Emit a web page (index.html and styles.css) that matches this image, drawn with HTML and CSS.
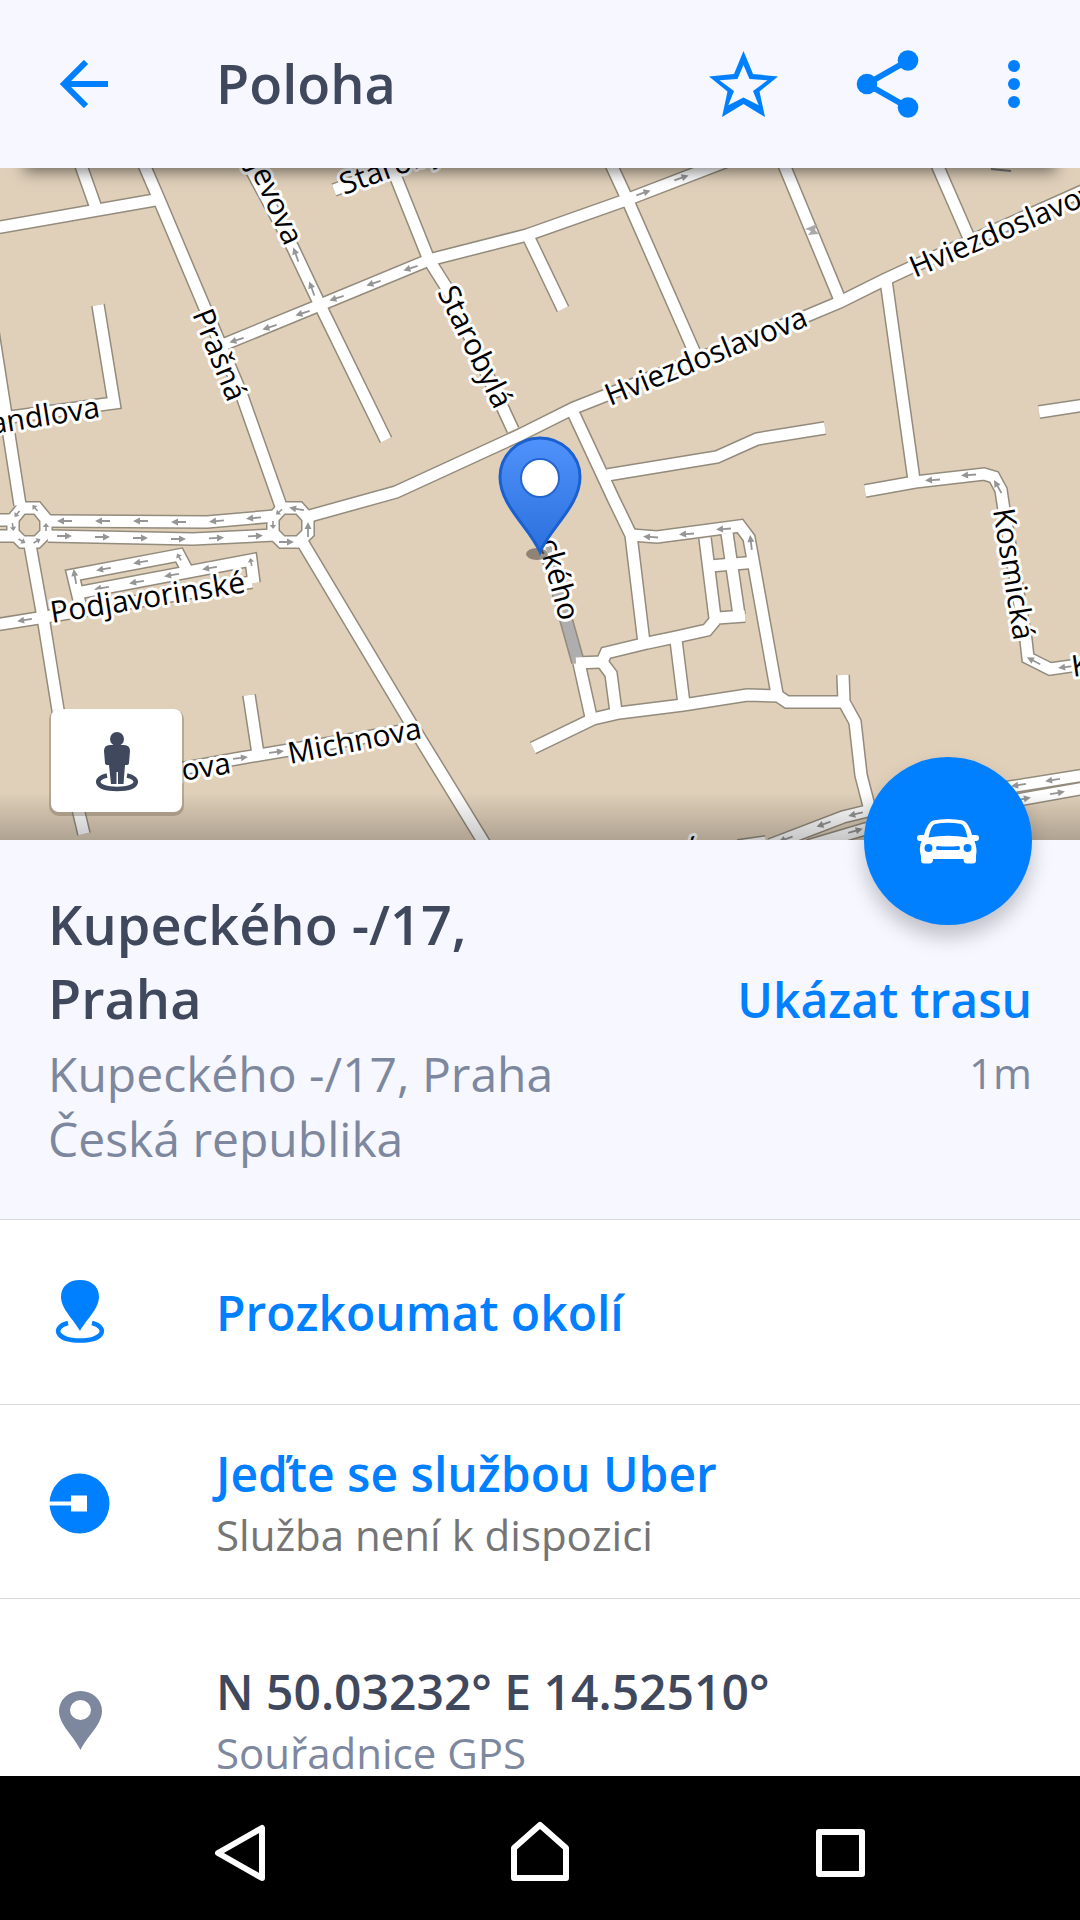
FILE: index.html
```html
<!DOCTYPE html>
<html lang="cs">
<head>
<meta charset="utf-8">
<meta name="viewport" content="width=device-width, initial-scale=1">
<title>Poloha</title>
<link rel="stylesheet" href="styles.css">
</head>
<body>
<header class="toolbar">
  <button class="tool tool-back" type="button" aria-label="Zpět">
    <svg width="48" height="48" viewBox="0 0 48 48" fill="none" stroke="currentColor" stroke-width="6"><path d="M48 24H5M26 2L4 24L26 46"/></svg>
  </button>
  <h1 class="toolbar-title">Poloha</h1>
  <button class="tool" type="button" aria-label="Přidat k oblíbeným">
    <svg width="72" height="72" viewBox="0 0 72 72" fill="currentColor" fill-rule="evenodd"><path d="M35.500 3L45 26L70 28.500L51.500 43.500L57 69L35.500 56L14 69L19.500 43.500L1 28.500L26 26ZM35.500 17L29.500 31L11.500 32.300L26 43L20.300 57.300L35.500 49.500L50.700 57.300L45 43L59.500 32.300L41.500 31Z"/></svg>
  </button>
  <button class="tool" type="button" aria-label="Sdílet">
    <svg width="72" height="72" viewBox="0 0 72 72" fill="currentColor"><path d="M56 12.500L15 36L56 59.500" fill="none" stroke="currentColor" stroke-width="6"/><circle cx="15" cy="36" r="10.300"/><circle cx="56" cy="12.500" r="10.300"/><circle cx="56" cy="59.500" r="10.300"/></svg>
  </button>
  <button class="tool tool-menu" type="button" aria-label="Další možnosti">
    <svg width="12" height="48" viewBox="0 0 12 48" fill="currentColor"><circle cx="6" cy="6" r="6"/><circle cx="6" cy="24" r="6"/><circle cx="6" cy="42" r="6"/></svg>
  </button>
</header>

<main class="content">
  <section class="map" aria-label="Mapa">
    <svg class="map-canvas" viewBox="0 168 1080 672" preserveAspectRatio="xMidYMid slice">
      <defs>
        <g id="roads">
          <path d="M-5 228L155 200"/>
          <path d="M79 160L96 208"/>
          <path d="M142 160L158 197L207 313L241 393L283 512"/>
          <path d="M246 160L293 248L320 305L386 440"/>
          <path d="M220 346L320 305L429 260L527 235L626 200L730 160"/>
          <path d="M334 190L400 165"/>
          <path d="M389 160L429 260L448 290L513 430"/>
          <path d="M306 517L396 492L520 435L574 408L809 315L840 302L884 280L912 267L1085 190"/>
          <path d="M528 236L563 309"/>
          <path d="M609 160L628 201L697 358"/>
          <path d="M782 160L840 300"/>
          <path d="M935 160L969 238"/>
          <path d="M886 280L914 480"/>
          <path d="M865 491L915 482L984 474L994 477L1001 490L1004 510L1026 640L1028 658L1050 669L1085 664"/>
          <path d="M1039 412L1085 405"/>
          <path d="M607 475L717 457L757 439L825 428"/>
          <path d="M572 410L614 500L631 535L644 643"/>
          <path d="M631 535L657 537L740 526L749 538L753 560L777 694"/>
          <path d="M705 538L715 618"/>
          <path d="M710 566L757 562"/>
          <path d="M727 533L739 615"/>
          <path d="M745 616L717 618L707 630L676 637L647 643L606 653L602 662L576 663"/>
          <path d="M579 663L591 717"/>
          <path d="M602 662L611 674L616 712"/>
          <path d="M676 640L684 704"/>
          <path d="M533 748L593 719L619 713L683 705L747 695L778 696L787 702L845 702"/>
          <path d="M843 675L844 702L855 722L861 775L870 810"/>
          <path d="M-7 332L20 505"/>
          <path d="M98 305L114 403L-5 419"/>
          <path d="M30 545L43 617L58 710L79 813L84 834"/>
          <path d="M48 521L207 522L275 516"/>
          <path d="M48 536L193 539L275 535"/>
          <path d="M-5 520L14 520M-5 536L14 536"/>
          <path d="M22 508H37L46 519V533L37 542H22L13 533V519Z"/>
          <path d="M282 508H299L308 518V533L299 542H282L273 533V518Z"/>
          <path d="M80 604L73 575L179 555L187 570"/>
          <path d="M77 593L251 560L254 583"/>
          <path d="M-5 625L45 617L252 582"/>
          <path d="M303 543L410 722L486 846"/>
          <path d="M79 787L241 758L408 730"/>
          <path d="M249 695L258 754"/>
          <path d="M738 846L766 842"/>
          <path d="M770 845L843 817L880 808L1010 787L1085 775"/>
          <path d="M808 846L865 829L1023 799L1085 788"/>
        </g>
        <path id="arrow" d="M-7 -0.900H1V-3.500L8 0L1 3.500V0.900H-7Z"/>
        <path id="tick" d="M-4 -0.800H0V-3.200L4 0L0 3.200V0.800H-4Z"/>
        <linearGradient id="pinFill" x1="0" y1="0" x2="0" y2="1"><stop offset="0" stop-color="#5092fb"/><stop offset="1" stop-color="#2b70dd"/></linearGradient>
      </defs>

      <rect x="-1000" y="168" width="3080" height="672" fill="#e0d0ba"/>
      <path d="M545 548L560 598L578 662" class="path-case"/>
      <use href="#roads" class="road-case"/>
      <path d="M545 548L560 598L578 662" class="path-fill"/>
      <use href="#roads" class="road-fill"/>
      <path d="M805 229L817 224L815 230L819 234L808 235L811 231Z" fill="#aaa"/>
      <path d="M991 169L1011 171" stroke="#777" stroke-width="2"/>

      <g class="arrows">
        <use href="#arrow" transform="translate(237 340) rotate(162)"/><use href="#arrow" transform="translate(270 327) rotate(162)"/><use href="#arrow" transform="translate(303 313) rotate(162)"/><use href="#arrow" transform="translate(337 298) rotate(162)"/><use href="#arrow" transform="translate(374 283) rotate(162)"/><use href="#arrow" transform="translate(411 268) rotate(162)"/>
        <use href="#arrow" transform="translate(296 255) rotate(-110)"/><use href="#arrow" transform="translate(312 289) rotate(-110)"/>
        <use href="#arrow" transform="translate(643 193) rotate(-19)"/><use href="#arrow" transform="translate(681 178) rotate(-19)"/>
        <use href="#arrow" transform="translate(933 480) rotate(176)"/><use href="#arrow" transform="translate(969 475) rotate(176)"/><use href="#arrow" transform="translate(998 487) rotate(-120)"/>
        <use href="#arrow" transform="translate(1034 661) rotate(-153)"/><use href="#arrow" transform="translate(1066 667) rotate(172)"/>
        <use href="#arrow" transform="translate(651 537) rotate(184)"/><use href="#arrow" transform="translate(687 534) rotate(176)"/><use href="#arrow" transform="translate(724 529) rotate(176)"/><use href="#arrow" transform="translate(751 543) rotate(-97)"/>
        <use href="#arrow" transform="translate(65 521) rotate(180)"/><use href="#arrow" transform="translate(103 521) rotate(180)"/><use href="#arrow" transform="translate(141 521) rotate(180)"/><use href="#arrow" transform="translate(179 522) rotate(180)"/><use href="#arrow" transform="translate(217 521) rotate(175)"/><use href="#arrow" transform="translate(254 518) rotate(175)"/>
        <use href="#arrow" transform="translate(64 536)"/><use href="#arrow" transform="translate(102 537)"/><use href="#arrow" transform="translate(140 538)"/><use href="#arrow" transform="translate(178 539)"/><use href="#arrow" transform="translate(216 538) rotate(-3)"/><use href="#arrow" transform="translate(255 536) rotate(-3)"/>
        <use href="#arrow" transform="translate(141 562) rotate(170)"/><use href="#arrow" transform="translate(104 569) rotate(170)"/><use href="#arrow" transform="translate(75 577) rotate(-100)"/><use href="#tick" transform="translate(179 557) rotate(-120)"/>
        <use href="#arrow" transform="translate(210 568) rotate(170)"/><use href="#arrow" transform="translate(172 575) rotate(170)"/><use href="#arrow" transform="translate(137 582) rotate(170)"/><use href="#arrow" transform="translate(102 588) rotate(170)"/><use href="#tick" transform="translate(251 562) rotate(-100)"/>
        <use href="#arrow" transform="translate(25 620) rotate(171)"/>
        <use href="#arrow" transform="translate(240 758) rotate(-7)"/><use href="#arrow" transform="translate(276 752) rotate(-7)"/>
        <use href="#arrow" transform="translate(856 814) rotate(166)"/><use href="#arrow" transform="translate(824 824) rotate(160)"/><use href="#arrow" transform="translate(786 839) rotate(160)"/><use href="#arrow" transform="translate(855 831) rotate(-16)"/>
        <use href="#arrow" transform="translate(1019 785) rotate(171)"/><use href="#arrow" transform="translate(1053 780) rotate(171)"/><use href="#arrow" transform="translate(1023 799) rotate(-10)"/><use href="#arrow" transform="translate(1057 793) rotate(-10)"/>
        <use href="#tick" transform="translate(35 508) rotate(-130)"/><use href="#tick" transform="translate(17 514) rotate(130)"/><use href="#tick" transform="translate(13 527) rotate(80)"/><use href="#tick" transform="translate(22 541) rotate(30)"/><use href="#tick" transform="translate(37 541) rotate(-30)"/><use href="#tick" transform="translate(46 527) rotate(-90)"/>
        <use href="#arrow" transform="translate(297 509) rotate(190)"/><use href="#tick" transform="translate(279 512) rotate(140)"/><use href="#tick" transform="translate(273 525) rotate(90)"/><use href="#arrow" transform="translate(286 542)"/><use href="#arrow" transform="translate(308 530) rotate(-90)"/>
      </g>

      <g class="street">
        <text transform="translate(610 406) rotate(-22)">Hviezdoslavova</text>
        <text transform="translate(915 278) rotate(-23)">Hviezdoslavova</text>
        <text transform="translate(101 417) rotate(-9)" text-anchor="end">Handlova</text>
        <text transform="translate(192 314) rotate(68)">Prašná</text>
        <text transform="translate(285 247) rotate(66)" text-anchor="end">jevova</text>
        <text transform="translate(344 195) rotate(-20)">Starobylá</text>
        <text transform="translate(437 292) rotate(64)">Starobylá</text>
        <text transform="translate(993 510) rotate(81)">Kosmická</text>
        <text transform="translate(1073 677) rotate(-8)">Kosmická</text>
        <text transform="translate(560 622) rotate(75)" text-anchor="end">ckého</text>
        <text transform="translate(52 623) rotate(-9)">Podjavorinské</text>
        <text transform="translate(290 764) rotate(-11)">Michnova</text>
        <text transform="translate(232 773) rotate(-9)" text-anchor="end">Michnova</text>
        <text transform="translate(706 856) rotate(-20)" text-anchor="end">á</text>
      </g>

      <ellipse cx="537" cy="554" rx="11" ry="6" fill="#6b6259" opacity=".7"/>
      <path d="M540 552C530 528 500 506 500 477A40 39 0 0 1 580 477C580 506 550 528 540 552Z" fill="url(#pinFill)" stroke="#1a60cf" stroke-width="3"/>
      <circle cx="540" cy="478" r="19" fill="#fff" stroke="#2466cf" stroke-width="2"/>
    </svg>
    <button class="street-view" type="button" aria-label="Pohled z ulice">
      <svg width="48" height="64" viewBox="0 0 48 64" fill="#3f485c"><circle cx="24" cy="9" r="7"/><path d="M17 15H31Q37 15 37 21L36 33Q36 35 33 35H32L30.500 54H25V42H23.500V54H18L16 35H15Q12 35 12 33L11 21Q11 15 17 15Z"/><path d="M14 45.500C1 48 1 59 24 59C47 59 47 48 34 45.500" fill="none" stroke="#3f485c" stroke-width="4.500"/></svg>
    </button>
  </section>

  <section class="place">
    <button class="route-fab" type="button" aria-label="Trasa autem">
      <svg width="64" height="48" viewBox="0 0 64 48" fill="#fff" fill-rule="evenodd"><path d="M17 3.500Q32 .5 47 3.500Q53 6 56 18H60Q63 18 63 21Q63 24 60 24H58.500Q61.500 32 60 39V43Q60 46.500 57 46.500H51Q47.500 46.500 47.500 42H17Q17 46.500 13.500 46.500H8Q5 46.500 5 43V39Q2.500 32 5.500 24H4Q1 24 1 21Q1 18 4 18H8Q11 6 17 3.500ZM19 7Q15 8 12.500 20.500Q32 17 51.500 20.500Q49 8 45 7Q32 4.500 19 7ZM12.500 27A4 4 0 1 0 12.500 35A4 4 0 1 0 12.500 27ZM51.500 27A4 4 0 1 0 51.500 35A4 4 0 1 0 51.500 27ZM21.500 29Q32 30 42.500 29Q44 29 44 31Q44 33 42.500 33H21.500Q20 33 20 31Q20 29 21.500 29Z"/></svg>
    </button>
    <div class="place-main">
      <h2 class="place-name">Kupeckého -/17, Praha</h2>
      <p class="place-address">Kupeckého -/17, Praha<br>Česká republika</p>
    </div>
    <div class="place-route">
      <a class="route-link" href="#trasa">Ukázat trasu</a>
      <span class="route-distance">1m</span>
    </div>
  </section>

  <ul class="actions">
    <li>
      <a class="action" href="#okoli">
        <svg class="action-icon" viewBox="0 0 64 64" fill="currentColor"><path d="M32 50C27 40 13 28 13 16C13 5 21 -1 32 -1S51 5 51 16C51 28 37 40 32 50Z"/><path d="M20 42C4 46 7 59.500 32 59.500S60 46 44 42" fill="none" stroke="currentColor" stroke-width="4.500"/></svg>
        <span class="action-title">Prozkoumat okolí</span>
      </a>
    </li>
    <li>
      <a class="action" href="#uber">
        <svg class="action-icon" viewBox="0 0 64 64"><circle cx="31.500" cy="33.500" r="30" fill="currentColor"/><path d="M0 31.500H23V25.500H39V41.500H23V35.500H0Z" fill="#fff"/></svg>
        <span class="action-text"><span class="action-title">Jeďte se službou Uber</span><span class="action-note note-muted">Služba není k dispozici</span></span>
      </a>
    </li>
    <li>
      <div class="action action-info">
        <svg class="action-icon" viewBox="0 0 64 64" fill="#7d879e" fill-rule="evenodd"><path d="M32.500 62C26 48 11 37 11 23A21.500 20 0 0 1 54 23C54 37 39 48 32.500 62ZM32.500 12A10.500 10 0 1 0 32.500 32A10.500 10 0 1 0 32.500 12Z"/></svg>
        <span class="action-text"><span class="action-title">N 50.03232° E 14.52510°</span><span class="action-note">Souřadnice GPS</span></span>
      </div>
    </li>
  </ul>
</main>

<nav class="system-bar" aria-label="Systémová navigace">
  <button class="system-button" type="button" aria-label="Zpět"><svg viewBox="0 0 72 72"><path d="M14 41L58 16V66Z"/></svg></button>
  <button class="system-button" type="button" aria-label="Domů"><svg viewBox="0 0 72 72"><path d="M10 36L36 13L62 36V66H10Z"/></svg></button>
  <button class="system-button" type="button" aria-label="Přehled"><svg viewBox="0 0 72 72"><path d="M15 20H58V62H15Z"/></svg></button>
</nav>
</body>
</html>
```
FILE: styles.css
```css
:root {
  --blue: #0080ff;
  --ink: #3f485c;
  --slate: #7d879e;
  --panel: #f6f7ff;
  --line: #d7d9dc;
}

* {
  box-sizing: border-box;
  margin: 0;
  padding: 0;
}

body {
  display: flex;
  flex-direction: column;
  height: 100vh;
  overflow: hidden;
  background: #fff;
  color: var(--ink);
  font-family: "Open Sans", "Noto Sans", sans-serif;
}

button {
  border: 0;
  background: none;
  color: inherit;
  font: inherit;
  cursor: pointer;
}

a {
  color: var(--blue);
  text-decoration: none;
}

svg {
  display: block;
}

.toolbar {
  position: relative;
  z-index: 2;
  display: flex;
  flex: none;
  align-items: center;
  height: 168px;
  padding-right: 12px;
  background: var(--panel);
  box-shadow: 0 28px 14px -24px rgba(0, 0, 0, 0.5);
}

.tool {
  display: flex;
  flex: none;
  align-items: center;
  justify-content: center;
  width: 144px;
  height: 144px;
  color: var(--blue);
}

.tool-back {
  width: 168px;
}

.tool-menu {
  width: 108px;
}

.toolbar-title {
  flex: 1;
  padding: 0 0 2px 48px;
  font-size: 54px;
  font-weight: 600;
  line-height: 74px;
}

.content {
  flex: 1;
  min-height: 0;
  overflow: hidden;
}

.map {
  position: relative;
  height: 672px;
  overflow: hidden;
}

.map::after {
  content: "";
  position: absolute;
  inset: auto 0 0;
  height: 48px;
  background: linear-gradient(rgba(0, 0, 0, 0), rgba(0, 0, 0, 0.22));
  pointer-events: none;
}

.map-canvas {
  width: 100%;
  height: 100%;
}

.road-case,
.path-case {
  fill: none;
  stroke: #938b7c;
  stroke-width: 14px;
}

.road-fill,
.path-fill {
  fill: none;
  stroke: #fff;
  stroke-width: 11px;
}

.path-fill {
  stroke: #aeaeae;
}

.arrows {
  fill: #959595;
}

.street {
  fill: #000;
  stroke: #fff;
  stroke-width: 6px;
  stroke-linejoin: round;
  paint-order: stroke;
  font-size: 30px;
}

.street-view {
  position: absolute;
  z-index: 1;
  bottom: 28px;
  left: 51px;
  display: flex;
  align-items: center;
  justify-content: center;
  width: 131px;
  height: 103px;
  padding-top: 2px;
  border-radius: 8px;
  background: #fff;
  box-shadow: 0 2px 0 2px rgba(110, 95, 75, 0.35);
}

.place {
  position: relative;
  display: flex;
  align-items: flex-end;
  gap: 144px;
  padding: 47px 48px 48px;
  border-bottom: 1px solid var(--line);
  background: var(--panel);
}

.place-main {
  flex: 1;
}

.place-name {
  margin-bottom: 6px;
  font-size: 54px;
  font-weight: 600;
  line-height: 74px;
}

.place-address {
  color: var(--slate);
  font-size: 48px;
  line-height: 65px;
}

.place-route {
  display: flex;
  flex: none;
  flex-direction: column;
  align-self: flex-start;
  align-items: flex-end;
  gap: 12px;
  padding-top: 80px;
}

.route-link {
  font-size: 48px;
  font-weight: 600;
  line-height: 65px;
}

.route-distance {
  color: var(--slate);
  font-size: 42px;
  line-height: 57px;
}

.route-fab {
  position: absolute;
  z-index: 1;
  top: -83px;
  right: 48px;
  display: flex;
  align-items: center;
  justify-content: center;
  width: 168px;
  height: 168px;
  border-radius: 50%;
  background: var(--blue);
  box-shadow: 0 12px 20px rgba(0, 0, 0, 0.22);
}

.actions {
  list-style: none;
}

.action {
  display: flex;
  align-items: center;
  gap: 104px;
  min-height: 185px;
  padding: 36px 48px 35px;
  border-bottom: 1px solid var(--line);
}

.action-info {
  padding: 60px 48px;
}

.action-icon {
  flex: none;
  width: 64px;
  height: 64px;
  overflow: visible;
}

.action-text {
  display: flex;
  flex-direction: column;
}

.action-title {
  font-size: 48px;
  font-weight: 600;
  line-height: 65px;
}

.action-note {
  color: var(--slate);
  font-size: 42px;
  line-height: 57px;
}

.note-muted {
  color: #757575;
}

.system-bar {
  display: flex;
  flex: none;
  align-items: center;
  justify-content: center;
  gap: 228px;
  height: 144px;
  background: #000;
}

.system-button {
  width: 72px;
  height: 72px;
}

.system-button svg {
  fill: none;
  stroke: #fff;
  stroke-width: 6px;
  stroke-linejoin: round;
}
```
